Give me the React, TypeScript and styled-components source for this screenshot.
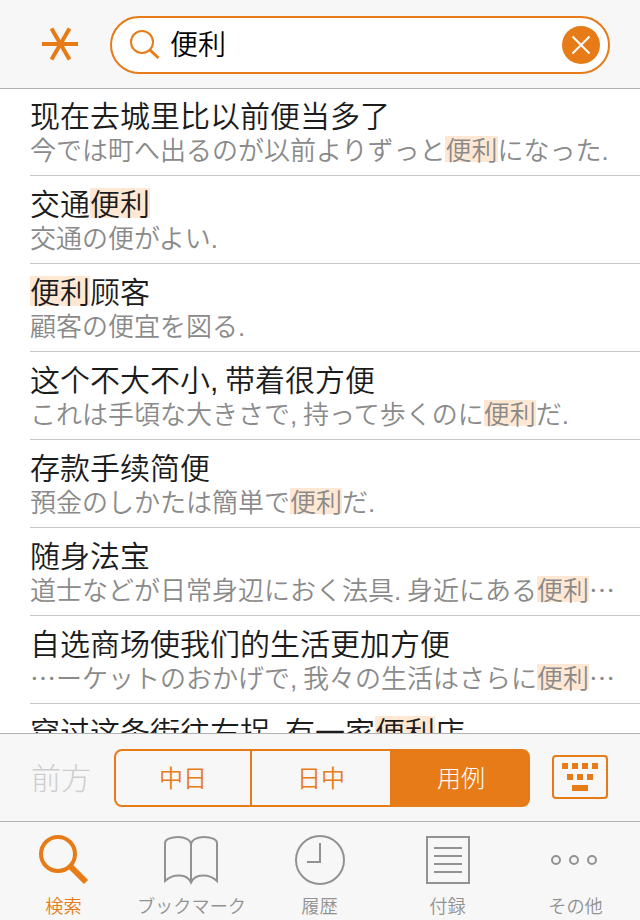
import React from "react";
import styled, { createGlobalStyle } from "styled-components";

const ORANGE = "#e77b18";
const GRAY = "#929292";

const GlobalStyle = createGlobalStyle`
  * { box-sizing: border-box; }
  body { margin: 0; background: #fff; }
  button { border: 0; padding: 0; margin: 0; background: none; font: inherit; }
`;

const Screen = styled.div`
  display: flex;
  flex-direction: column;
  width: 640px;
  height: 920px;
  overflow: hidden;
  background: #fff;
  font-family: "Noto Sans CJK JP", "Noto Sans CJK SC", sans-serif;
  font-weight: 350;
`;

const Header = styled.header`
  display: flex;
  flex: none;
  align-items: flex-start;
  height: 89px;
  padding: 16px 30px 0 40px;
  border-bottom: 1px solid #b2b2b2;
  background: #f7f7f7;
`;

const AsteriskButton = styled.button`
  flex: none;
  width: 40px;
  height: 40px;
  margin: 8px 30px 0 0;
`;

const SearchField = styled.div`
  display: flex;
  flex: 1;
  align-items: center;
  height: 58px;
  padding: 0 8px 0 16px;
  border: 2px solid ${ORANGE};
  border-radius: 29px;
  background: #fff;
`;

const Query = styled.span`
  flex: 1;
  margin-left: 10px;
  padding-bottom: 4px;
  font-size: 28px;
  line-height: 50px;
  color: #000;
`;

const Icon = styled.svg`
  display: block;
  flex: none;
  fill: none;
  stroke: currentColor;
  color: ${ORANGE};
`;

const Results = styled.ul`
  flex: 1;
  min-height: 0;
  margin: 0;
  padding: 0 0 0 30px;
  overflow: hidden;
  list-style: none;
`;

const ResultRow = styled.li`
  height: 88px;
  padding-top: 7px;
  border-bottom: 1px solid #c8c8c8;
  white-space: nowrap;

  &:first-child {
    height: 87px;
    padding-top: 6px;
  }
`;

const Title = styled.div`
  font-family: "Noto Sans CJK SC", sans-serif;
  font-size: 30px;
  line-height: 38px;
  height: 39px;
  color: #1c1c1c;
`;

const Subtitle = styled.div`
  font-size: 26px;
  line-height: 30px;
  height: 30px;
  color: #8a8a8a;
`;

const Highlight = styled.mark`
  display: inline-block;
  height: 1em;
  line-height: 1em;
  color: inherit;
  background: #ffe8d3;

  ${Title} & {
    line-height: calc(1em - 2px);
  }
`;

const Punctuation = styled.span`
  display: inline-block;
  width: 0.5em;
  font-family: "Liberation Sans", sans-serif;
`;

const FilterBar = styled.div`
  display: flex;
  flex: none;
  align-items: flex-start;
  height: 88px;
  padding: 15px 32px 0 31px;
  border-top: 1px solid #b2b2b2;
  background: #f7f7f7;
`;

const MatchMode = styled.button`
  width: 83px;
  font-size: 30px;
  font-weight: 300;
  line-height: 54px;
  text-align: left;
  color: #cecece;
`;

const Segments = styled.div`
  display: grid;
  grid-template-columns: 136px 140px 136px;
  width: 416px;
  height: 58px;
  border: 2px solid ${ORANGE};
  border-radius: 8px;
  background: ${ORANGE};
  overflow: hidden;
`;

const Segment = styled.button<{ $active?: boolean }>`
  border-right: ${(p) => (p.$active ? "0" : `2px solid ${ORANGE}`)};
  background: ${(p) => (p.$active ? ORANGE : "#f7f7f7")};
  color: ${(p) => (p.$active ? "#fff" : ORANGE)};
  padding: ${(p) => (p.$active ? "0 0 2px 2px" : "0 0 2px")};
  font-size: 24px;
  font-weight: ${(p) => (p.$active ? 300 : 350)};
  line-height: 52px;
  text-align: center;
`;

const KeyboardButton = styled.button`
  margin: 6px 0 0 22px;
`;

const TabBar = styled.nav`
  display: grid;
  grid-template-columns: repeat(5, 1fr);
  flex: none;
  height: 99px;
  border-top: 1px solid #b2b2b2;
  background: #f7f7f7;
`;

const Tab = styled.button<{ $active?: boolean }>`
  display: flex;
  flex-direction: column;
  align-items: center;
  padding-top: 8px;
  color: ${(p) => (p.$active ? ORANGE : GRAY)};

  ${Icon} {
    color: inherit;
  }
`;

const TabLabel = styled.span`
  margin: 2px 1px 0 0;
  font-size: 18.2px;
  line-height: 26px;
  white-space: nowrap;
`;

type Entry = { title: string; sub: string };

const entries: Entry[] = [
  { title: "现在去城里比以前便当多了", sub: "今では町へ出るのが以前よりずっと[便利]になった." },
  { title: "交通[便利]", sub: "交通の便がよい." },
  { title: "[便利]顾客", sub: "顧客の便宜を図る." },
  { title: "这个不大不小, 带着很方便", sub: "これは手頃な大きさで, 持って歩くのに[便利]だ." },
  { title: "存款手续简便", sub: "預金のしかたは簡単で[便利]だ." },
  { title: "随身法宝", sub: "道士などが日常身辺におく法具. 身近にある[便利]…" },
  { title: "自选商场使我们的生活更加方便", sub: "…ーケットのおかげで, 我々の生活はさらに[便利]…" },
  { title: "穿过这条街往右拐, 有一家[便利]店", sub: "" },
];

function RichText({ text }: { text: string }) {
  return (
    <>
      {text.split(/(\[.*?\]|[,.] ?)/).map((part, i) => {
        if (part.startsWith("[")) return <Highlight key={i}>{part.slice(1, -1)}</Highlight>;
        if (/^[,.]/.test(part)) return <Punctuation key={i}>{part}</Punctuation>;
        return part;
      })}
    </>
  );
}

const tabs = [
  {
    label: "検索",
    icon: (
      <>
        <circle cx="26" cy="24" r="17" strokeWidth="4" />
        <path d="M38.500 36.500L54 52" strokeWidth="6" />
      </>
    ),
  },
  {
    label: "ブックマーク",
    icon: (
      <path
        d="M31 52.500V15C31 9.500 24 7 18 7C11 7 5 9.500 5 13V51C13 43.500 27 43.500 31 52.500C35 43.500 49 43.500 57 51V13C57 9.500 51 7 44 7C38 7 31 9.500 31 15"
        strokeWidth="2"
      />
    ),
  },
  {
    label: "履歴",
    icon: (
      <>
        <circle cx="32" cy="30" r="24" strokeWidth="2" />
        <path d="M32 13V32H19" strokeWidth="2" />
      </>
    ),
  },
  {
    label: "付録",
    icon: <path d="M11 7H53V53H11ZM18 18H46M18 26H46M18 34H46M18 42H46" strokeWidth="2" />,
  },
  {
    label: "その他",
    icon: (
      <>
        <circle cx="12" cy="30" r="4" strokeWidth="2" />
        <circle cx="30" cy="30" r="4" strokeWidth="2" />
        <circle cx="48" cy="30" r="4" strokeWidth="2" />
      </>
    ),
  },
];

export default function App() {
  return (
    <Screen>
      <GlobalStyle />
      <Header>
        <AsteriskButton>
          <Icon width="40" height="40" strokeWidth="4">
            <path d="M2 20H38M11.500 4.500L29.500 35.500M29.500 4.500L11.500 35.500" />
          </Icon>
        </AsteriskButton>
        <SearchField>
          <Icon width="32" height="32">
            <circle cx="14" cy="13" r="11" strokeWidth="2" />
            <path d="M22 21L30.500 29" strokeWidth="3" />
          </Icon>
          <Query>便利</Query>
          <Icon width="38" height="38">
            <circle cx="19" cy="19" r="19" fill={ORANGE} stroke="none" />
            <path d="M10.500 10.500L27.500 27.500M27.500 10.500L10.500 27.500" stroke="#fff" strokeWidth="2" />
          </Icon>
        </SearchField>
      </Header>
      <Results>
        {entries.map((e) => (
          <ResultRow key={e.title}>
            <Title lang="zh">
              <RichText text={e.title} />
            </Title>
            <Subtitle lang="ja">
              <RichText text={e.sub} />
            </Subtitle>
          </ResultRow>
        ))}
      </Results>
      <FilterBar>
        <MatchMode>前方</MatchMode>
        <Segments>
          <Segment>中日</Segment>
          <Segment>日中</Segment>
          <Segment $active>用例</Segment>
        </Segments>
        <KeyboardButton>
          <Icon width="56" height="44">
            <rect x="1" y="1" width="54" height="42" rx="3" strokeWidth="2" />
            <path d="M10 11H46M15 22H41" strokeWidth="6" strokeDasharray="6 4" />
            <path d="M20 33H36" strokeWidth="6" />
          </Icon>
        </KeyboardButton>
      </FilterBar>
      <TabBar>
        {tabs.map((t, i) => (
          <Tab key={t.label} $active={i === 0}>
            <Icon width="64" height="60">
              {t.icon}
            </Icon>
            <TabLabel>{t.label}</TabLabel>
          </Tab>
        ))}
      </TabBar>
    </Screen>
  );
}
